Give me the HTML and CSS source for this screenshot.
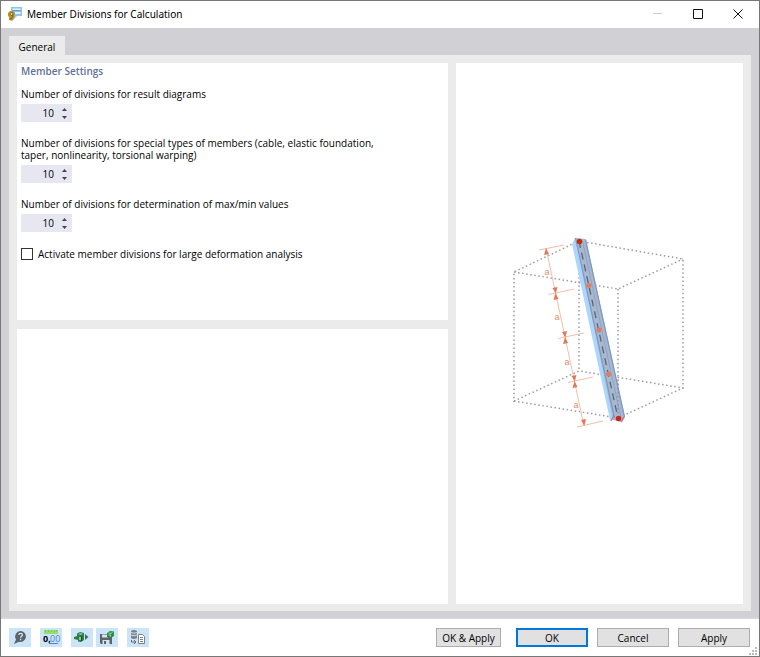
FILE: index.html
```html
<!DOCTYPE html>
<html lang="en">
<head>
  <meta charset="UTF-8" />
  <meta name="viewport" content="width=device-width, initial-scale=1.0"/>
  <title>Member Divisions for Calculation</title>
  <link rel="stylesheet" href="styles.css">
</head>
<body>
  <div class="window">
    <header class="titlebar">
      <svg class="app-icon" width="14" height="14" viewBox="0 0 14 14">
        <path d="M3 0h11v9H9l-3 3V9H3z" fill="#8fc3ee"/>
        <path d="M4.500 1.500h8v1.500h-8zM7 5h5.500v2H7z" fill="#e4f1fb"/>
        <path d="M4.500 3.500h8" stroke="#5a9bd5"/>
        <path d="M0 6l2-2 3 0 2 2-1 3 0 3-2 2-3-1 0-3-1-1z" fill="#b8972f"/>
        <circle cx="3.500" cy="7" r="1.500" fill="#f2d560" stroke="#6f5a1b" stroke-width=".8"/>
        <path d="M5 7.500c0 3-1 4-3 4.500" stroke="#6f5a1b" fill="none"/>
      </svg>
      <h1>Member Divisions for Calculation</h1>
      <div class="window-controls">
        <button aria-label="Minimize" disabled><svg width="10" height="10"><path d="M0 4.500h9" stroke="#ccc"/></svg></button>
        <button aria-label="Maximize"><svg width="10" height="10"><path d="M.5.5h9v9h-9z" fill="none" stroke="#111"/></svg></button>
        <button aria-label="Close"><svg width="10" height="10"><path d="M.5.5l9 9M9.500.5l-9 9" stroke="#111"/></svg></button>
      </div>
    </header>

    <main class="content">
      <div class="tabs" role="tablist">
        <button class="tab" role="tab" aria-selected="true">General</button>
      </div>

      <div class="tab-page">
        <div class="left">
          <!-- Member settings -->
          <section class="panel settings">
            <h2>Member Settings</h2>
            <div class="field">
              <label for="resultDiv">Number of divisions for result diagrams</label>
              <div class="spinner">
                <input type="number" id="resultDiv" value="10" min="1" />
                <div class="arrows">
                  <button aria-label="Increase" onclick="resultDiv.stepUp()"><svg width="5" height="3"><path d="M0 3L2.500 0 5 3z"/></svg></button>
                  <button aria-label="Decrease" onclick="resultDiv.stepDown()"><svg width="5" height="3"><path d="M0 0h5L2.500 3z"/></svg></button>
                </div>
              </div>
            </div>
            <div class="field">
              <label for="specialDiv">Number of divisions for special types of members (cable, elastic foundation, taper, nonlinearity, torsional warping)</label>
              <div class="spinner">
                <input type="number" id="specialDiv" value="10" min="1" />
                <div class="arrows">
                  <button aria-label="Increase" onclick="specialDiv.stepUp()"><svg width="5" height="3"><path d="M0 3L2.500 0 5 3z"/></svg></button>
                  <button aria-label="Decrease" onclick="specialDiv.stepDown()"><svg width="5" height="3"><path d="M0 0h5L2.500 3z"/></svg></button>
                </div>
              </div>
            </div>
            <div class="field">
              <label for="maxMinDiv">Number of divisions for determination of max/min values</label>
              <div class="spinner">
                <input type="number" id="maxMinDiv" value="10" min="1" />
                <div class="arrows">
                  <button aria-label="Increase" onclick="maxMinDiv.stepUp()"><svg width="5" height="3"><path d="M0 3L2.500 0 5 3z"/></svg></button>
                  <button aria-label="Decrease" onclick="maxMinDiv.stepDown()"><svg width="5" height="3"><path d="M0 0h5L2.500 3z"/></svg></button>
                </div>
              </div>
            </div>
            <label class="check"><input type="checkbox" /> Activate member divisions for large deformation analysis</label>
          </section>
          <section class="panel extra"></section>
        </div>

        <!-- Member sketch -->
        <section class="panel sketch">
          <svg width="200" height="212" viewBox="500 228 200 212">
            <g class="box">
              <path d="M580 241L515 272V401L580 371z"/>
              <path d="M580 241L684 259V388L580 371"/>
              <path d="M515 272L619 289L684 259"/>
              <path d="M515 401L619 418L684 388"/>
              <path d="M619 289V418"/>
            </g>
            <path d="M576 238L573 244 611 420 619 420 580 238z" fill="#acd6fb"/>
            <path d="M577 238L587 239 626 417 623 422 614 420z" fill="#a7b8d1"/>
            <path d="M576.500 238L615.500 418M586.500 240L625.500 417" stroke="#8197c0" stroke-width="1.200"/>
            <path d="M583.500 241L622 418" stroke="#8ea2c5"/>
            <path d="M619 380V418" stroke="#7d88a5" stroke-dasharray="1.500 2.500"/>
            <path d="M580 241L619 418" stroke="#5d6370" stroke-width="1.300" stroke-dasharray="7 5"/>
            <path d="M612 421L615 415M622 422L625 417" stroke="#bd7e9b" stroke-width="1.500"/>

            <path class="dim" d="M547 248L585 426M540 250L565 245M549.500 294.500L575 289M559 338.500L585 333M569 382.500L594 377M578 427L604 421"/>
            <g fill="#e27958">
              <path d="M553.500 288L558.500 287 556.800 293.500zM563 332L568 331 566.300 337.500zM572.500 376L577.500 375 575.800 381.500zM582 420L587 419 585.300 426z"/>
              <path d="M547 248L550 254 545 255zM556.500 293L559.500 299 554.500 300zM566 337L569 343 564 344zM575.500 381L578.500 387 573.500 388z"/>
            </g>
            <g class="dim-label">
              <text x="548" y="275">a</text>
              <text x="558" y="320">a</text>
              <text x="568" y="365">a</text>
              <text x="577" y="408">a</text>
            </g>
            <g fill="#e57b5b">
              <circle cx="590" cy="285.500" r="2.500"/>
              <circle cx="600" cy="330" r="2.500"/>
              <circle cx="609.500" cy="374" r="2.500"/>
            </g>
            <g fill="#c92a0c">
              <circle cx="580.500" cy="241.500" r="2.700"/>
              <circle cx="619.500" cy="418.500" r="2.700"/>
            </g>
          </svg>
        </section>
      </div>
    </main>

    <footer class="footer">
      <div class="tools">
        <button class="tool" aria-label="Help"><svg width="22" height="19">
          <path d="M11.500 3a5.500 5.500 0 1 1-1.500 10.800L5 16l2-4.500A5.500 5.500 0 0 1 11.500 3z" fill="#5c6369"/>
          <path d="M9.800 7c0-2.300 3.600-2.300 3.600 0 0 1.300-1.800 1.200-1.800 2.700M11.600 10.800v1.400" stroke="#d8e9f7" stroke-width="1.200" fill="none"/>
        </svg></button>
        <button class="tool" aria-label="Units and decimal places"><svg width="22" height="19">
          <path d="M4 2h14v4H4z" fill="#92df6b"/>
          <path d="M5.500 2v2M8.500 2v2M11.500 2v2M14.500 2v2M16.500 2v2" stroke="#7cc45b"/>
          <text x="3" y="14" class="num">0,</text><text x="10" y="14" class="num blue">00</text>
          <path d="M9 15.500h9" stroke="#4b83dc"/>
        </svg></button>
        <button class="tool" aria-label="Show model"><svg width="22" height="19">
          <path d="M3 9l3-1V5.500l3-1.500 4 1v7l-3 2-3-.5V12L3 11z" fill="#2f7d49"/>
          <path d="M7 6l2.500-1 2.500.7-2.500 1.300zM8 9h2v3H8z" fill="#8cc79a"/>
          <path d="M10.500 8v5" stroke="#174b2b"/>
          <path d="M14 6v6l3.500-3z" fill="#4b6670"/>
        </svg></button>
        <button class="tool near" aria-label="Save as default"><svg width="22" height="19">
          <path d="M4 6h12v10H5l-1-1z" fill="#5c6369"/>
          <path d="M6 6.500h6v3H6zM6.500 12h7v4h-7z" fill="#d5e5f0"/>
          <path d="M8 13h2v3H8z" fill="#5c6369"/>
          <path d="M11 5l3-2 4 .5V8l-3 2-4-.7z" fill="#2d8b4c"/>
          <path d="M12.500 5l2.500.5 1.500-1M12.500 7h2v1.500" stroke="#a0d4aa" fill="none"/>
        </svg></button>
        <button class="tool" aria-label="Copy from database"><svg width="22" height="19">
          <path d="M4 3q3-2 6 0v7q-3 2-6 0z" fill="#7b8186"/>
          <path d="M4 4.500q3 1.500 6 0M4 7q3 1.500 6 0" stroke="#cfdfeb" fill="none"/>
          <path d="M4.500 12v2h4M7 12l2 2-2 2" stroke="#62696f" fill="none"/>
          <path d="M11.500 6.500h4l2 2v7h-6z" fill="#fff" stroke="#7b8186"/>
          <path d="M13 9.500h3M13 11.500h3M13 13.500h3" stroke="#7b8186"/>
        </svg></button>
      </div>
      <div class="actions">
        <button class="btn apply-close">OK &amp; Apply</button>
        <button class="btn primary">OK</button>
        <button class="btn">Cancel</button>
        <button class="btn">Apply</button>
      </div>
      <svg class="grip" width="8" height="8"><path d="M6 0h2v2H6zM6 3h2v2H6zM3 3h2v2H3zM0 6h2v2H0zM3 6h2v2H3zM6 6h2v2H6z" fill="#bbb"/></svg>
    </footer>
  </div>
</body>
</html>
```
FILE: styles.css
```css
* {
  box-sizing: border-box;
}
body {
  margin: 0;
  font-family: "Open Sans", "Noto Sans", sans-serif;
  font-size: 10px;
  line-height: 12px;
  color: #000;
}
h1, h2 {
  margin: 0;
}
button {
  font: inherit;
  color: inherit;
  padding: 0;
  border: none;
  background: none;
}
svg {
  display: block;
}
.window {
  display: flex;
  flex-direction: column;
  min-height: 100vh;
  border: 1px solid #777;
  background: white;
}

/* title bar */
.titlebar {
  display: flex;
  align-items: center;
  height: 27px;
  padding: 0 1px 1px 7px;
}
.titlebar h1 {
  flex: 1;
  margin-left: 5px;
  font-family: "Noto Sans", sans-serif;
  font-size: 10px;
  font-weight: normal;
}
.window-controls {
  display: flex;
}
.window-controls button {
  display: flex;
  align-items: center;
  justify-content: center;
  width: 40px;
  height: 26px;
}

/* tab page */
.content {
  flex: 1;
  display: flex;
  flex-direction: column;
  padding: 8px 8px 7px;
  background: #d0d0d5;
  border-bottom: 1px solid #dcdcdf;
}
.tab {
  width: 56px;
  height: 19px;
  padding-top: 2px;
  background: #ebebeb;
}
.tab-page {
  flex: 1;
  display: flex;
  gap: 8px;
  padding: 8px 8px 7px;
  background: #ebebeb;
}
.left {
  flex: 3;
  display: flex;
  flex-direction: column;
  gap: 9px;
}
.panel {
  background: white;
}
.extra {
  flex: 1;
}
.sketch {
  flex: 2;
  display: flex;
  align-items: center;
  justify-content: center;
}

/* settings */
.settings {
  padding: 2px 4px 60px;
}
.settings h2 {
  margin-bottom: 11px;
  font-size: 10px;
  font-weight: 600;
  color: #5f7099;
}
.field {
  margin-bottom: 15px;
}
.field label {
  display: block;
  max-width: 360px;
  margin-bottom: 4px;
}
.spinner {
  display: flex;
  width: 51px;
  height: 18px;
  background: #e7e7f2;
}
.spinner input {
  width: 33px;
  padding: 0;
  border: none;
  background: none;
  font: inherit;
  color: inherit;
  text-align: right;
  appearance: textfield;
}
.spinner input::-webkit-inner-spin-button {
  display: none;
}
.arrows {
  display: flex;
  flex-direction: column;
  padding: 1px 0 1px 8px;
}
.arrows button {
  flex: 1;
  display: flex;
  align-items: center;
  width: 9px;
}
.arrows path {
  fill: #444;
}
.check {
  display: flex;
  align-items: center;
  gap: 5px;
  padding-top: 1px;
}
.check input {
  appearance: none;
  width: 12px;
  height: 12px;
  margin: 0;
  border: 1px solid #333;
  background: white;
}
.check input:checked {
  background: #0078d7;
}

/* drawing */
.box path {
  fill: none;
  stroke: #9a9aa6;
  stroke-width: 1.5;
  stroke-dasharray: 1.5 2.6;
}
.dim {
  fill: none;
  stroke: #f5bda8;
}
.dim-label {
  font-family: "Liberation Sans", Arial, sans-serif;
  font-size: 9px;
  fill: #e58a6b;
  text-anchor: middle;
}

/* footer */
.footer {
  position: relative;
  display: flex;
  align-items: center;
  justify-content: space-between;
  height: 37px;
  padding: 0 9px 0 8px;
}
.tools, .actions {
  display: flex;
  gap: 9px;
}
.tool {
  width: 22px;
  height: 19px;
  background: #cce4f7;
}
.tool.near {
  margin-left: -6px;
}
.num {
  font-size: 9px;
  font-weight: bold;
}
.num.blue {
  font-weight: normal;
  fill: #4b83dc;
}
.btn {
  width: 72px;
  height: 19px;
  background: #e1e1e1;
  border: 1px solid #adadad;
}
.btn.apply-close {
  width: 65px;
  margin-right: 6px;
}
.btn.primary {
  border: 2px solid #0078d7;
}
.grip {
  position: absolute;
  right: 2px;
  bottom: 1px;
}
```
